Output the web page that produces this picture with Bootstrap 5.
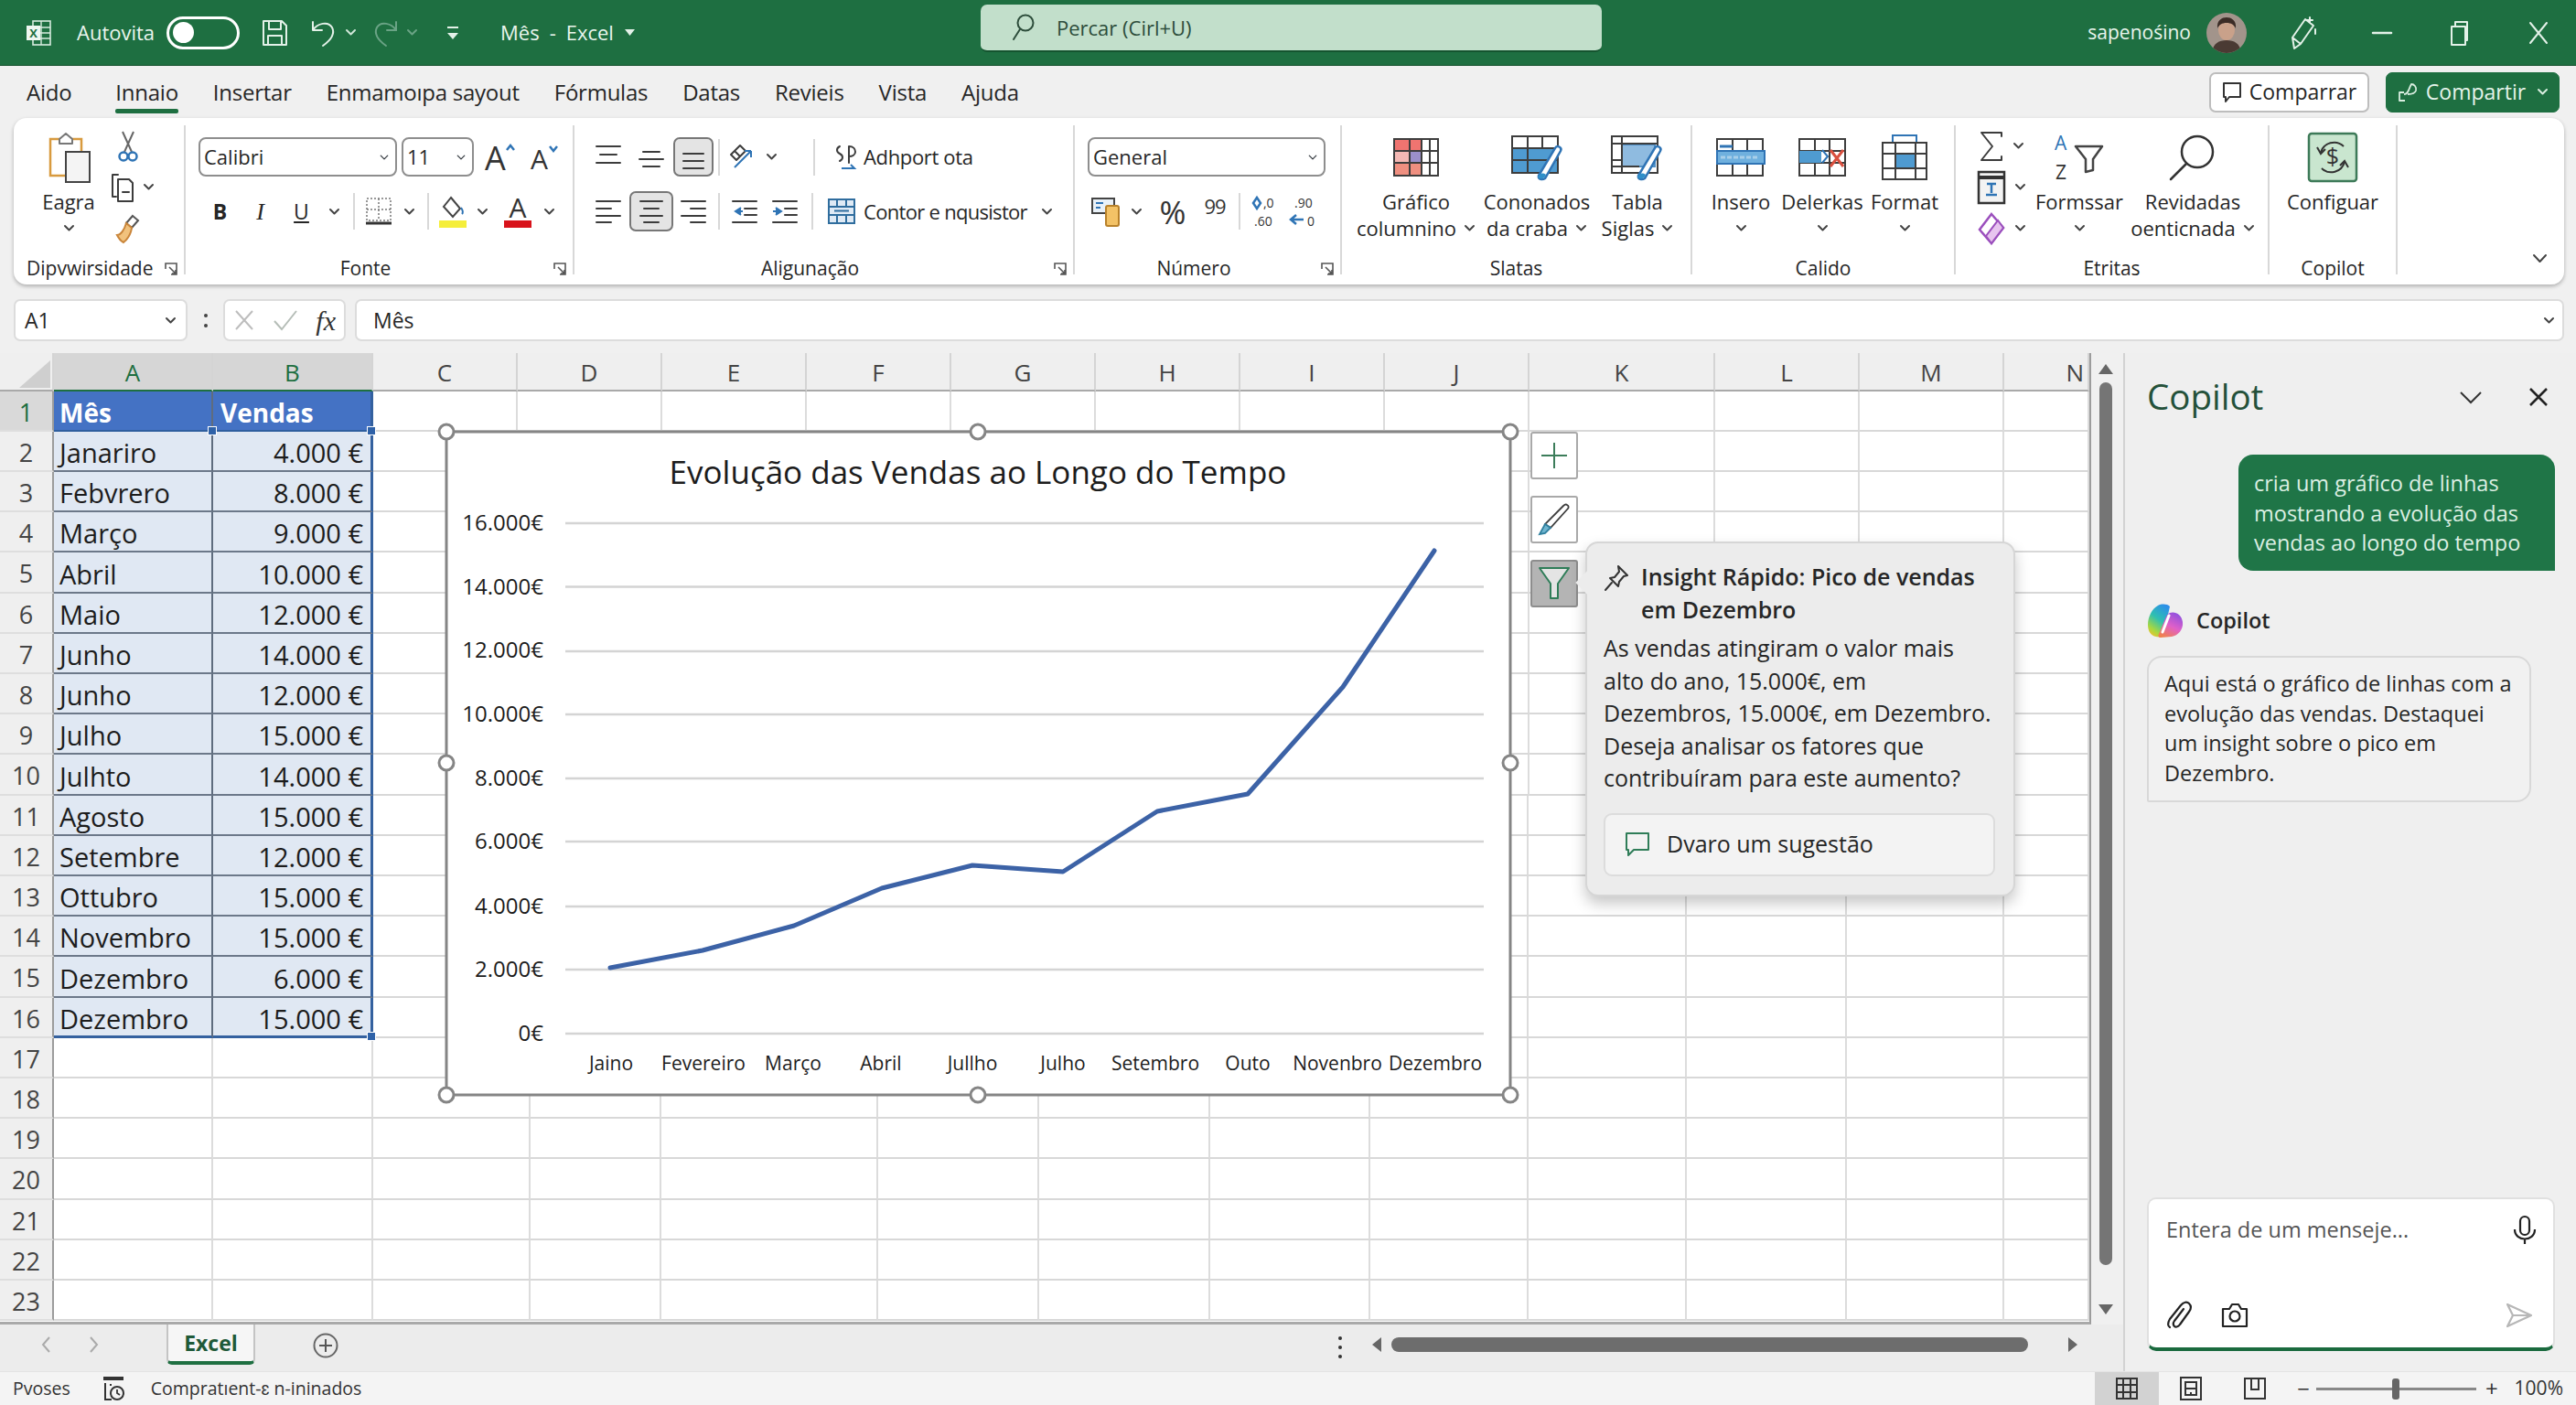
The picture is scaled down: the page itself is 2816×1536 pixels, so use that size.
<!DOCTYPE html>
<html lang="pt">
<head>
<meta charset="UTF-8" />
<title>Mês - Excel</title>
<link href="https://cdn.jsdelivr.net/npm/bootstrap@5.3.3/dist/css/bootstrap.min.css" rel="stylesheet" />
<style>
  html, body { margin: 0; width: 2816px; height: 1536px; overflow: hidden; }
  body { font-family: "Open Sans", "Liberation Sans", sans-serif; color: #262626; background: #f0f0f0; display: flex; flex-direction: column; }
  svg { display: block; flex: none; overflow: visible; }
  .ln { fill: none; stroke: #3c3c3c; stroke-width: 2; stroke-linecap: round; stroke-linejoin: round; }
  .chev { width: 13px; height: 9px; fill: none; stroke: #444; stroke-width: 2; stroke-linecap: round; stroke-linejoin: round; }

  /* title bar */
  .titlebar { height: 72px; flex: none; background: #1e6f41; color: #e9f5ed; display: grid; grid-template-columns: 1072px 679px 1fr; border-bottom: 1px solid #14512d; }
  .tb-left { display: flex; align-items: center; padding-left: 27px; font-size: 22px; }
  .tb-left .wl, .tb-right .wl { fill: none; stroke: #e3f1e8; stroke-width: 2; stroke-linecap: round; stroke-linejoin: round; }
  .tb-autosave { margin-left: 27px; width: 98px; }
  .tb-toggle { width: 80px; height: 36px; border: 3px solid #fff; border-radius: 18px; display: flex; align-items: center; padding-left: 4px; }
  .tb-toggle i { width: 23px; height: 23px; border-radius: 50%; background: #fff; display: block; }
  .tb-custom { margin-left: 30px; }
  .tb-doc { margin-left: 44px; display: flex; align-items: center; gap: 11px; font-size: 22px; }
  .tb-search { margin: 5px 0 14px; background: #c2dfcb; border-radius: 7px; display: flex; align-items: center; padding-left: 34px; gap: 23px; font-size: 22px; color: #2d4d3b; border-bottom: 2px solid #15542f; }
  .tb-right { display: flex; align-items: center; justify-content: flex-end; padding-right: 28px; font-size: 21px; }
  .tb-avatar { width: 44px; height: 44px; margin: 0 44px 0 17px; }
  .tb-min { margin-left: 55px; }
  .tb-max { margin-left: 56px; }
  .tb-x { margin-left: 59px; }

  /* tabs row */
  .tabsrow { height: 57px; flex: none; display: flex; align-items: center; justify-content: space-between; padding: 0 18px 0 29px; background: #f0f0f0; }
  .tabsrow .nav { gap: 38px; font-size: 24px; letter-spacing: -.25px; }
  .tabsrow .nav-item:first-child { margin-right: 10px; }
  .tabsrow .nav-link { padding: 0; color: #262626; position: relative; }
  .tabsrow .nav-link.active::after { content: ""; position: absolute; left: 0; right: 0; bottom: -5px; height: 5px; background: #1e6f41; border-radius: 2px; }
  .act-btn { height: 44px; font-size: 23px; padding: 0; border-radius: 7px; display: flex; align-items: center; justify-content: center; gap: 8px; }
  .act-comment { width: 175px; background: #fff; border: 2px solid #bdbdbd; color: #262626; }
  .act-share { width: 190px; margin-left: 18px; background: #1e6f41; border: 1px solid #1e6f41; color: #e4f3ea; }

  /* ribbon */
  .ribbon { height: 182px; flex: none; margin: 0 13px 0 15px; padding-top: 8px; background: #fff; border-radius: 14px; box-shadow: 0 2px 4px rgba(0,0,0,.28); display: flex; font-size: 22px; }
  .rb-group { height: 163px; flex: none; display: flex; flex-direction: column; border-right: 2px solid #d8d8d8; }
  .rb-body { height: 144px; flex: none; display: flex; }
  .rb-label { height: 19px; line-height: 24px; font-size: 21px; display: grid; grid-template-columns: 1fr auto 1fr; text-align: center; }
  .rb-label svg { justify-self: end; width: 16px; height: 16px; margin: 5px 6px 0 0; }
  .rb-label .lnc { fill: none; stroke: #555; stroke-width: 1.6; }
  .rb-label .lbl-off { margin-right: 30px; }
  .g-clip { width: 188px; }
  .g-clip .rb-body { padding-left: 17px; }
  .g-clip .rb-label { grid-template-columns: auto 1fr; padding-left: 14px; }
  .g-font { width: 425px; }
  .g-align { width: 547px; }
  .g-num { width: 292px; }
  .g-chart { width: 383px; }
  .g-chart .rb-body { padding-left: 11px; }
  .g-cells { width: 288px; }
  .g-cells .rb-body { padding-left: 5px; }
  .g-edit { width: 343px; }
  .g-edit .rb-body { padding-left: 18px; }
  .g-cfg { width: 140px; }
  .rb-end { flex: 1; display: flex; align-items: flex-end; justify-content: flex-end; padding: 0 18px 23px 0; }
  .rb-end .chev { width: 17px; height: 11px; }
  .rb-rows { display: flex; flex-direction: column; gap: 16px; padding: 13px 0 0 14px; }
  .rb-rows .fsel { font-size: 22px; height: 43px; padding: 0 22px 0 4px; border: 2px solid #8e8e8e; border-radius: 8px; background-position: right 5px center; background-size: 14px 10px; color: #262626; flex: none; }
  .sel-font { width: 217px; }
  .sel-size { width: 79px; margin-left: 5px; }
  .sel-num { width: 260px; }
  .rb-row { display: grid; align-items: center; height: 44px; }
  .font-r1 { display: flex; align-items: center; height: 43px; }
  .font-a1 { margin-left: 12px; }
  .font-r2 { grid-template-columns: 43px 45px 45px 26px 18px 36px 30px 12px 42px 22px 56px 12px; margin-left: 2px; }
  .align-r1 { grid-template-columns: 46px 48px 44px 12px 40px 22px 30px 12px 12px 36px auto; height: 43px; }
  .align-r2 { grid-template-columns: 46px 48px 44px 12px 43px 45px 16px 48px 186px auto; }
  .num-r2 { grid-template-columns: 40px 27px 52px 40px 14px 42px 46px; }
  .tool { display: flex; align-items: center; justify-content: center; height: 100%; white-space: nowrap; }
  .tool.on { background: #e4e4e4; border: 2px solid #777; border-radius: 7px; }
  .tool-txt { letter-spacing: -.35px; }
  .tool-txt.tight { letter-spacing: -.7px; }
  .vsep { width: 2px; height: 40px; background: #d8d8d8; margin: 0 auto; }
  .bigb { display: flex; flex-direction: column; align-items: center; flex: none; line-height: 29px; text-align: center; }
  .big-ico { height: 69px; display: flex; align-items: center; justify-content: center; }
  .big-line { height: 29px; display: flex; align-items: center; gap: 8px; white-space: nowrap; }
  .stack3 { display: flex; flex-direction: column; flex: none; }
  .stack3 > div { height: 45px; display: flex; align-items: center; gap: 10px; justify-content: center; }
  .c-clip { width: 86px; }
  .c-small { width: 44px; }
  .w140 { width: 140px; } .w124 { width: 124px; } .w96 { width: 96px; } .w82 { width: 82px; } .w98 { width: 98px; }
  .w64 { width: 64px; } .w106 { width: 106px; } .w142 { width: 142px; }
  .fs-b { font-weight: 700; font-size: 23px; }
  .fs-i { font-style: italic; font-family: "Liberation Serif", serif; font-size: 26px; }
  .fs-u { text-decoration: underline; font-size: 23px; }
  .pct { font-size: 35px; line-height: 1; color: #333; }
  .cmm { font-size: 22px; color: #333; letter-spacing: -1px; margin-top: -12px; }

  /* formula bar */
  .fbar { height: 46px; flex: none; margin: 16px 13px 13px 15px; display: flex; font-size: 23px; }
  .fbox { background: #fff; border: 2px solid #dcdcdc; border-radius: 7px; display: flex; align-items: center; }
  .f-name { width: 190px; padding: 0 10px; justify-content: space-between; }
  .f-dots { width: 39px; display: flex; flex-direction: column; align-items: center; justify-content: center; gap: 7px; }
  .f-dots i { width: 4px; height: 4px; background: #444; display: block; border-radius: 50%; }
  .f-fx { width: 134px; padding: 0 9px; justify-content: space-between; }
  .f-fx em { font-family: "Liberation Serif", serif; font-size: 30px; color: #333; }
  .f-val { flex: 1; margin-left: 10px; padding: 0 8px 0 18px; justify-content: space-between; }

  /* main split */
  .main-split { flex: 1; display: flex; min-height: 0; }
  .left-col { width: 2321px; flex: none; display: flex; flex-direction: column; }
  .grid-row { flex: 1; display: flex; min-height: 0; }
  .sheet-wrap { width: 2286px; flex: none; position: relative; background: #fff; border-right: 2px solid #9c9c9c; border-bottom: 3px solid #a9a9a9; overflow: visible; }
  .sheet { border-collapse: separate; border-spacing: 0; table-layout: fixed; width: 2284px; font-size: 29px; }
  .cw-59 { width: 59px; } .cw-174 { width: 174px; } .cw-175 { width: 175px; } .cw-158 { width: 158px; } .cw-203 { width: 203px; } .cw-93 { width: 93px; }
  .cw-172 { width: 172px; } .cw-143 { width: 143px; } .cw-237 { width: 237px; } .cw-176 { width: 176px; } .cw-187 { width: 187px; } .cw-173 { width: 173px; }
  .sheet th { font-weight: 400; text-align: center; line-height: 1; background: #efefef; color: #444; font-size: 27px; border-right: 2px solid #9c9c9c; border-bottom: 2px solid #dedede; padding: 2px 0 0; }
  .sheet thead th { height: 42px; border-right: 2px solid #d4d4d4; border-bottom: 2px solid #a9a9a9; font-size: 26px; }
  .sheet thead th.hd-on { background: #d6d6d6; color: #1e6f41; border-bottom-color: #1e6f41; }
  .sheet th.hd-row { background: #d9d9d9; color: #1e6f41; }
  .sheet td { border-right: 2px solid #dcdcdc; border-bottom: 2px solid #d8d8d8; padding: 3px 6px 0; line-height: 1; white-space: nowrap; position: relative; }
  .sheet tbody tr { height: 44px; }
  .sheet tbody tr:nth-child(5n) { height: 45px; }
  .corner { width: 34px; height: 30px; background: #cfcfcf; clip-path: polygon(100% 0, 100% 100%, 0 100%); margin: 4px 0 0 21px; }
  .sheet td.dat { background: #e0e8f3; color: #1c1c1c; border-right: 2px solid #5f6c7e; border-bottom: 2px solid #6c7889; }
  .sheet td.val { text-align: right; padding-right: 8px; border-right: 3px solid #34619f; }
  .sheet td.hed { background: #4472c4; color: #fff; font-weight: 700; font-size: 28px; border-bottom: 2px solid #2f5f9f; }
  .sheet td.val.hed { text-align: left; padding-left: 8px; }
  .sheet td.sel-last { border-bottom: 3px solid #34619f; }
  .sel-dot { position: absolute; right: -6px; bottom: -6px; width: 10px; height: 10px; background: #2f62a8; border: 1px solid #fff; z-index: 2; }

  .chart-obj { position: absolute; left: 470px; top: 68px; width: 1200px; height: 760px; font-family: "Open Sans", sans-serif; }
  .side-btn { position: absolute; left: 1673px; width: 52px; height: 52px; background: #fff; border: 2px solid #a9a9a9; border-radius: 3px; display: flex; align-items: center; justify-content: center; }
  .sb-1 { top: 86px; } .sb-2 { top: 156px; } .sb-3 { top: 226px; background: #b4b4b4; border-color: #8d8d8d; }
  .insight { position: absolute; left: 1733px; top: 206px; width: 470px; height: 388px; background: #ececec; border: 2px solid #d6d6d6; border-radius: 14px; box-shadow: 0 8px 16px rgba(0,0,0,.22); padding: 19px 20px 0 18px; font-size: 25px; line-height: 35.5px; color: #262626; }
  .insight::before { content: ""; position: absolute; left: -9px; top: 34px; width: 18px; height: 18px; background: #ececec; transform: rotate(45deg); }
  .ins-title { display: flex; gap: 13px; font-weight: 600; margin-bottom: 7px; }
  .ins-btn { margin-top: 20px; height: 69px; background: #f3f3f3; border: 2px solid #dcdcdc; border-radius: 9px; display: flex; align-items: center; gap: 18px; padding-left: 21px; }

  .vscroll { flex: 1; display: flex; flex-direction: column; align-items: center; padding: 12px 3px 0 0; }
  .vscroll .thumb { width: 14px; height: 965px; background: #757575; border-radius: 7px; margin: 9px 0 43px; }
  .tri-up { width: 0; height: 0; border: 8px solid transparent; border-top: 0; border-bottom: 11px solid #666; }
  .tri-dn { width: 0; height: 0; border: 8px solid transparent; border-bottom: 0; border-top: 11px solid #666; }
  .tri-lt { width: 0; height: 0; border: 8px solid transparent; border-left: 0; border-right: 10px solid #666; }
  .tri-rt { width: 0; height: 0; border: 8px solid transparent; border-right: 0; border-left: 10px solid #666; }

  .tabbar { height: 51px; flex: none; display: flex; align-items: flex-start; background: #ececec; }
  .sh-nav { width: 182px; height: 44px; display: flex; align-items: center; padding-left: 44px; gap: 41px; }
  .sh-tab { width: 97px; height: 44px; background: #f6f6f6; border: 2px solid #c4c4c4; border-top: 0; border-bottom: 4px solid #1e6f41; border-radius: 0 0 6px 6px; text-align: center; font-weight: 700; font-size: 23px; line-height: 40px; color: #1f5a39; }
  .sh-add { margin: 9px 0 0 63px; width: 28px; height: 28px; }
  .sh-dots { margin: 13px 0 0 1091px; width: 8px; display: flex; flex-direction: column; gap: 6px; align-items: center; }
  .sh-dots i { width: 4px; height: 4px; border-radius: 50%; background: #333; display: block; }
  .hscroll { margin: 14px 0 0 31px; display: flex; align-items: center; }
  .hscroll .thumb { width: 696px; height: 16px; background: #6d6d6d; border-radius: 8px; margin: 0 44px 0 11px; }

  /* copilot pane */
  .pane { flex: 1; border-left: 2px solid #d2d2d2; background: #efefef; padding: 0 23px 22px 24px; display: flex; flex-direction: column; }
  .pane-hd { height: 58px; margin-top: 19px; display: flex; align-items: center; padding-right: 5px; }
  .pane-title { font-size: 38.5px; color: #24513a; flex: 1; }
  .pane-hd svg { width: 26px; height: 26px; }
  .bub-me { align-self: flex-end; width: 346px; height: 127px; margin-top: 34px; background: #1f7547; color: #dcefe3; border-radius: 16px 16px 0 16px; padding: 15px 10px 0 17px; font-size: 23.5px; line-height: 32.5px; }
  .cp-who { height: 38px; margin-top: 36px; display: flex; align-items: center; gap: 14px; font-weight: 600; font-size: 23.5px; }
  .bub-ai { width: 420px; height: 160px; margin-top: 19px; background: #f1f1f1; border: 2px solid #d8d8d8; border-radius: 16px 16px 16px 2px; padding: 12px 10px 0 17px; font-size: 23.5px; line-height: 32.5px; }
  .msg-box { margin-top: auto; height: 168px; background: #fff; border: 2px solid #e0e0e0; border-bottom: 4px solid #1a6a3e; border-radius: 10px; padding: 0 18px 0 19px; display: flex; flex-direction: column; }
  .msg-top { display: flex; justify-content: space-between; align-items: center; height: 66px; font-size: 23.5px; color: #555; padding-top: 2px; }
  .msg-bot { margin-top: auto; height: 64px; display: flex; align-items: center; gap: 32px; padding-bottom: 6px; }

  /* status bar */
  .statusbar { height: 37px; flex: none; background: #f4f4f4; border-top: 1px solid #e4e4e4; display: flex; align-items: center; font-size: 19.5px; padding-left: 14px; color: #333; }
  .st-cal { margin: 0 28px 0 34px; }
  .st-right { margin-left: auto; display: flex; align-items: center; height: 100%; padding-right: 14px; }
  .st-view { width: 70px; height: 100%; display: flex; align-items: center; justify-content: center; }
  .st-view.on { background: #d2d2d2; }
  .zoomer { width: 175px; height: 3px; background: #888; margin: 0 10px 0 7px; position: relative; }
  .zoomer i { position: absolute; left: 83px; top: -10px; width: 8px; height: 23px; border-radius: 3px; background: #666; }
  .zm { font-size: 24px; line-height: 1; }
  .zm-first { margin-left: 11px; }
  .zm-pct { font-size: 21px; margin-left: 18px; }
</style>
</head>
<body>

<!-- title bar -->
<header class="titlebar">
  <div class="tb-left">
    <svg width="30" height="30" viewBox="0 0 30 30"><rect x="9" y="2" width="19" height="26" fill="none" stroke="#d7ebdf" stroke-width="1.6"/><path d="M9 9h19M9 15h19M9 21h19M18 2v26" fill="none" stroke="#d7ebdf" stroke-width="1.4"/><rect x="2" y="7" width="15" height="16" fill="#eef7f1"/><text x="9.500" y="20" font-size="13" font-weight="700" fill="#1e6f41" text-anchor="middle">X</text></svg>
    <span class="tb-autosave">Autovita</span>
    <span class="tb-toggle"><i></i></span>
    <svg class="ms-4" width="29" height="30" viewBox="0 0 29 30"><path class="wl" d="M2 2h20l5 5v21H2zM8 2v9h13V2M7 28V18h15v10"/></svg>
    <svg class="ms-4" width="30" height="30" viewBox="0 0 30 30"><path class="wl" d="M3 3v9h10M3 12C8 4 20 2 24 9c4 8-3 15-10 20"/></svg>
    <svg class="chev ms-2" viewBox="0 0 13 9"><path stroke="#cfe5d7" d="M2 2l4.500 4.500L11 2"/></svg>
    <svg class="ms-3" width="30" height="30" viewBox="0 0 30 30"><path d="M27 3v9H17M27 12C22 4 10 2 6 9c-4 8 3 15 10 20" fill="none" stroke="#6aa385" stroke-width="2" stroke-linecap="round"/></svg>
    <svg class="chev ms-2" viewBox="0 0 13 9"><path stroke="#6aa385" d="M2 2l4.500 4.500L11 2"/></svg>
    <svg class="tb-custom" width="16" height="18" viewBox="0 0 16 18"><path d="M2 3h12" stroke="#e3f1e8" stroke-width="2"/><path d="M2 9h12l-6 7z" fill="#e3f1e8"/></svg>
    <div class="tb-doc"><span>Mês</span><span>-</span><span>Excel</span><svg width="13" height="9" viewBox="0 0 13 9"><path d="M1 1h11L6.500 8z" fill="#e3f1e8"/></svg></div>
  </div>
  <div class="tb-search">
    <svg width="26" height="30" viewBox="0 0 26 30"><circle cx="15" cy="10" r="8.500" fill="none" stroke="#2d4d3b" stroke-width="2"/><path d="M9 17L2 28" stroke="#2d4d3b" stroke-width="2" stroke-linecap="round"/></svg>
    <span>Percar (Cirl+U)</span>
  </div>
  <div class="tb-right">
    <span>sapenośino</span>
    <svg class="tb-avatar" viewBox="0 0 44 44"><defs><clipPath id="av"><circle cx="22" cy="22" r="22"/></clipPath></defs><g clip-path="url(#av)"><rect width="44" height="44" fill="#a2948b"/><path d="M6 44c1-11 8-14 16-14s15 3 16 14z" fill="#4a3a33"/><ellipse cx="22" cy="19" rx="9" ry="11" fill="#c9a18a"/><path d="M12 17c-1-9 5-12 10-12s11 3 10 12c-2-4-5-6-10-6s-8 2-10 6z" fill="#3b2c26"/></g></svg>
    <svg width="36" height="40" viewBox="0 0 36 40"><path class="wl" d="M8 37l-2-12L20 5l9 7-14 20zM6 25l9 7M25 3v6M22 6h6M31 16v5"/></svg>
    <svg class="tb-min" width="26" height="4" viewBox="0 0 26 4"><path d="M3 2h20" stroke="#e3f1e8" stroke-width="2.500" stroke-linecap="round"/></svg>
    <svg class="tb-max" width="30" height="30" viewBox="0 0 30 30"><path class="wl" d="M7 8h15v20H7zM11 8V3h13v20h-2"/></svg>
    <svg class="tb-x" width="26" height="28" viewBox="0 0 26 28"><path class="wl" d="M4 3l18 22M22 3L4 25"/></svg>
  </div>
</header>

<!-- tabs -->
<div class="tabsrow">
  <ul class="nav">
    <li class="nav-item"><a class="nav-link" href="#">Aido</a></li>
    <li class="nav-item"><a class="nav-link active" href="#">Innaio</a></li>
    <li class="nav-item"><a class="nav-link" href="#">Insertar</a></li>
    <li class="nav-item"><a class="nav-link" href="#">Enmamoıpa sayout</a></li>
    <li class="nav-item"><a class="nav-link" href="#">Fórmulas</a></li>
    <li class="nav-item"><a class="nav-link" href="#">Datas</a></li>
    <li class="nav-item"><a class="nav-link" href="#">Revieis</a></li>
    <li class="nav-item"><a class="nav-link" href="#">Vista</a></li>
    <li class="nav-item"><a class="nav-link" href="#">Ajuda</a></li>
  </ul>
  <div class="d-flex">
    <button class="btn act-btn act-comment"><svg width="22" height="26" viewBox="0 0 22 26"><path d="M2 3h18v15H8l-4 5v-5H2z" fill="none" stroke="#333" stroke-width="2" stroke-linejoin="round"/></svg>Comparrar</button>
    <button class="btn act-btn act-share"><svg width="24" height="24" viewBox="0 0 24 24"><path d="M9 21H3v-9h5M8 14c5 0 5-6 8-11 3 0 6 3 5 7-1 3-5 4-9 4" fill="none" stroke="#d9eee0" stroke-width="1.800" stroke-linejoin="round"/></svg>Compartir<svg class="chev ms-1" viewBox="0 0 13 9"><path stroke="#d9eee0" d="M2 2l4.500 4.500L11 2"/></svg></button>
  </div>
</div>

<!-- ribbon -->
<div class="ribbon">
  <section class="rb-group g-clip">
    <div class="rb-body">
      <div class="bigb c-clip">
        <div class="big-ico"><svg width="50" height="56" viewBox="0 0 50 56"><path d="M5 8h34v40H5z" fill="#fff" stroke="#d89a3e" stroke-width="2.500"/><path d="M15 8l7-6 7 6v5H15z" fill="#fff" stroke="#777" stroke-width="2" stroke-linejoin="round"/><rect x="22" y="22" width="26" height="33" fill="#f4f4f4" stroke="#444" stroke-width="2"/></svg></div>
        <div class="big-line">Eagra</div>
        <div class="big-line"><svg class="chev" viewBox="0 0 13 9"><path d="M2 2l4.500 4.500L11 2"/></svg></div>
      </div>
      <div class="stack3 c-small">
        <div><svg width="24" height="36" viewBox="0 0 24 36"><path d="M6 2l10 22M18 2L8 24" fill="none" stroke="#666" stroke-width="2"/><circle cx="7" cy="29" r="4.500" fill="none" stroke="#2f74b5" stroke-width="2.500"/><circle cx="17" cy="29" r="4.500" fill="none" stroke="#2f74b5" stroke-width="2.500"/></svg></div>
        <div class="ms-2"><svg width="26" height="34" viewBox="0 0 26 34"><path class="ln" d="M9 3H3v24h4M9 8h12l4 4v20H9zM14 22h7"/></svg><svg class="chev" viewBox="0 0 13 9"><path d="M2 2l4.500 4.500L11 2"/></svg></div>
        <div><svg width="30" height="36" viewBox="0 0 30 36"><path d="M20 4l6 5-7 8-6-5z" fill="none" stroke="#555" stroke-width="2"/><path d="M13 12l6 5c-1 8-6 14-9 16-2-1-5-4-7-8 4 0 8-6 10-13z" fill="#f1c27d" stroke="#c9853a" stroke-width="2"/></svg></div>
      </div>
    </div>
    <div class="rb-label"><span class="text-start">Dipvwirsidade</span><svg viewBox="0 0 16 16"><path class="lnc" d="M2 8V2h12v12H8M6 6l7 7M13 9v4H9"/></svg></div>
  </section>

  <section class="rb-group g-font">
    <div class="rb-body">
      <div class="rb-rows">
        <div class="font-r1">
          <select class="form-select fsel sel-font"><option>Calibri</option></select>
          <select class="form-select fsel sel-size"><option>11</option></select>
          <div class="tool font-a1"><svg width="34" height="36" viewBox="0 0 34 36"><text x="0" y="32" font-size="36" fill="#333">A</text><path d="M24 10l4-5 4 5" fill="none" stroke="#2f74b5" stroke-width="2.500"/></svg></div>
          <div class="tool ms-3"><svg width="30" height="32" viewBox="0 0 30 32"><text x="0" y="29" font-size="30" fill="#333">A</text><path d="M21 4l4 5 4-5" fill="none" stroke="#2f74b5" stroke-width="2.500"/></svg></div>
        </div>
        <div class="rb-row font-r2">
          <div class="tool fs-b">B</div>
          <div class="tool fs-i">I</div>
          <div class="tool fs-u">U</div>
          <div class="tool"><svg class="chev" viewBox="0 0 13 9"><path d="M2 2l4.500 4.500L11 2"/></svg></div>
          <div class="tool"><div class="vsep"></div></div>
          <div class="tool"><svg width="30" height="32" viewBox="0 0 30 32"><path d="M2 2h26v24H2zM15 2v24M2 14h26" fill="none" stroke="#777" stroke-width="1.500" stroke-dasharray="2 2"/><path d="M1 29h28" stroke="#333" stroke-width="3"/></svg></div>
          <div class="tool"><svg class="chev" viewBox="0 0 13 9"><path d="M2 2l4.500 4.500L11 2"/></svg></div>
          <div class="tool"><div class="vsep"></div></div>
          <div class="tool"><svg width="30" height="36" viewBox="0 0 30 36"><path d="M13 3l10 12-8 9-10-11z" fill="none" stroke="#444" stroke-width="2"/><path d="M24 14c2 3 3 5 1 7" fill="none" stroke="#2f74b5" stroke-width="2"/><rect x="0" y="28" width="30" height="8" fill="#f5ee3a"/></svg></div>
          <div class="tool"><svg class="chev" viewBox="0 0 13 9"><path d="M2 2l4.500 4.500L11 2"/></svg></div>
          <div class="tool"><svg width="30" height="36" viewBox="0 0 30 36"><text x="15" y="25" font-size="30" fill="#333" text-anchor="middle">A</text><rect x="0" y="28" width="30" height="8" fill="#d8131b"/></svg></div>
          <div class="tool"><svg class="chev" viewBox="0 0 13 9"><path d="M2 2l4.500 4.500L11 2"/></svg></div>
        </div>
      </div>
    </div>
    <div class="rb-label"><span></span><span class="lbl-off">Fonte</span><svg viewBox="0 0 16 16"><path class="lnc" d="M2 8V2h12v12H8M6 6l7 7M13 9v4H9"/></svg></div>
  </section>

  <section class="rb-group g-align">
    <div class="rb-body">
      <div class="rb-rows">
        <div class="rb-row align-r1">
          <div class="tool"><svg width="28" height="28" viewBox="0 0 28 28"><path class="ln" d="M1 2h26M5 11h18M1 20h26"/></svg></div>
          <div class="tool"><svg width="28" height="28" viewBox="0 0 28 28"><path class="ln" d="M5 8h18M1 16h26M5 24h18"/></svg></div>
          <div class="tool on"><svg width="28" height="28" viewBox="0 0 28 28"><path class="ln" d="M3 10h22M3 18h22M3 26h22"/></svg></div>
          <div class="tool"><div class="vsep"></div></div>
          <div class="tool"><svg width="30" height="30" viewBox="0 0 30 30"><path class="ln" d="M2 12L12 2l6 6L8 18zM6 8l6 6"/><path d="M6 26L24 8M24 8h-7M24 8v7" fill="none" stroke="#2f74b5" stroke-width="2"/></svg></div>
          <div class="tool"><svg class="chev" viewBox="0 0 13 9"><path d="M2 2l4.500 4.500L11 2"/></svg></div>
          <span></span>
          <div class="tool"><div class="vsep"></div></div>
          <span></span>
          <div class="tool"><svg width="28" height="30" viewBox="0 0 28 30"><path class="ln" d="M6 3c-4 2-4 6 0 8s4 6 0 8M16 3v18M16 3c5 0 7 3 7 6s-3 5-7 5"/><path d="M8 27h14l-4-4M22 27" fill="none" stroke="#2f74b5" stroke-width="2"/></svg></div>
          <div class="tool tool-txt justify-content-start">Adhport ota</div>
        </div>
        <div class="rb-row align-r2">
          <div class="tool"><svg width="28" height="28" viewBox="0 0 28 28"><path class="ln" d="M1 3h26M1 11h16M1 19h26M1 26h16"/></svg></div>
          <div class="tool on"><svg width="28" height="28" viewBox="0 0 28 28"><path class="ln" d="M2 3h24M6 11h16M2 19h24M6 26h16"/></svg></div>
          <div class="tool"><svg width="28" height="28" viewBox="0 0 28 28"><path class="ln" d="M1 3h26M11 11h16M1 19h26M11 26h16"/></svg></div>
          <div class="tool"><div class="vsep"></div></div>
          <div class="tool"><svg width="28" height="28" viewBox="0 0 28 28"><path class="ln" d="M1 3h26M14 11h13M14 18h13M1 26h26"/><path d="M10 10l-6 4 6 4M4 14h8" fill="#2f74b5" stroke="#2f74b5" stroke-width="2"/></svg></div>
          <div class="tool"><svg width="28" height="28" viewBox="0 0 28 28"><path class="ln" d="M1 3h26M14 11h13M14 18h13M1 26h26"/><path d="M4 10l6 4-6 4M1 14h8" fill="#2f74b5" stroke="#2f74b5" stroke-width="2"/></svg></div>
          <div class="tool"><div class="vsep"></div></div>
          <div class="tool"><svg width="30" height="30" viewBox="0 0 30 30"><rect x="1" y="2" width="28" height="26" fill="#dfeaf5" stroke="#2f6d9e" stroke-width="2"/><path d="M1 10h28M1 19h28M10 2v8M20 2v8M10 19v9M20 19v9M7 14.500h16" fill="none" stroke="#2f6d9e" stroke-width="2"/></svg></div>
          <div class="tool tool-txt tight justify-content-start">Contor e nqusistor</div>
          <div class="tool"><svg class="chev ms-2" viewBox="0 0 13 9"><path d="M2 2l4.500 4.500L11 2"/></svg></div>
        </div>
      </div>
    </div>
    <div class="rb-label"><span></span><span class="lbl-off">Aligunação</span><svg viewBox="0 0 16 16"><path class="lnc" d="M2 8V2h12v12H8M6 6l7 7M13 9v4H9"/></svg></div>
  </section>

  <section class="rb-group g-num">
    <div class="rb-body">
      <div class="rb-rows">
        <div class="font-r1"><select class="form-select fsel sel-num"><option>General</option></select></div>
        <div class="rb-row num-r2">
          <div class="tool"><svg width="32" height="36" viewBox="0 0 32 36"><rect x="1" y="4" width="24" height="16" fill="#e9f1f8" stroke="#444" stroke-width="2"/><path d="M5 9h8M5 14h5" stroke="#2f74b5" stroke-width="2"/><rect x="16" y="12" width="14" height="22" rx="2" fill="#f3c266" stroke="#b8812a" stroke-width="2"/></svg></div>
          <div class="tool"><svg class="chev" viewBox="0 0 13 9"><path d="M2 2l4.500 4.500L11 2"/></svg></div>
          <div class="tool"><span class="pct">%</span></div>
          <div class="tool"><span class="cmm">99</span></div>
          <div class="tool"><div class="vsep"></div></div>
          <div class="tool"><svg width="36" height="36" viewBox="0 0 36 36"><text x="16" y="14" font-size="14" fill="#333">,0</text><text x="6" y="34" font-size="14" fill="#333">.60</text><path d="M9 3l-4 6 4 6 4-6z" fill="none" stroke="#2f74b5" stroke-width="2.500"/></svg></div>
          <div class="tool"><svg width="36" height="36" viewBox="0 0 36 36"><text x="6" y="14" font-size="14" fill="#333">.90</text><text x="20" y="34" font-size="14" fill="#333">0</text><path d="M2 27h14M8 22l-6 5 6 5" fill="none" stroke="#2f74b5" stroke-width="2.500"/></svg></div>
        </div>
      </div>
    </div>
    <div class="rb-label"><span></span><span class="lbl-off">Número</span><svg viewBox="0 0 16 16"><path class="lnc" d="M2 8V2h12v12H8M6 6l7 7M13 9v4H9"/></svg></div>
  </section>

  <section class="rb-group g-chart">
    <div class="rb-body">
      <div class="bigb w140">
        <div class="big-ico"><svg width="50" height="42" viewBox="0 0 50 42"><rect x="1" y="1" width="48" height="40" fill="#fff"/><rect x="1" y="1" width="30" height="13" fill="#ef7470"/><rect x="1" y="14" width="17" height="13" fill="#f4b8b4"/><rect x="18" y="14" width="13" height="13" fill="#9b8fc9"/><rect x="1" y="27" width="30" height="14" fill="#ef8f80"/><path d="M1 1h48v40H1zM1 14h48M1 27h48M18 1v40M31 1v40M40 1v40" fill="none" stroke="#3d3d3d" stroke-width="2"/></svg></div>
        <div class="big-line">Gráfico</div>
        <div class="big-line">columnino<svg class="chev" viewBox="0 0 13 9"><path d="M2 2l4.500 4.500L11 2"/></svg></div>
      </div>
      <div class="bigb w124">
        <div class="big-ico"><svg width="56" height="48" viewBox="0 0 56 48"><rect x="1" y="15" width="50" height="26" fill="#4f9bd1"/><path d="M1 1h50v40H1zM1 14h50M1 27h50M18 1v40M34 1v14" fill="none" stroke="#3d3d3d" stroke-width="2"/><path d="M30 44l18-30c2-4 8-1 6 3L37 47c-3 2-8 1-7-3z" fill="#fff" stroke="#2f74b5" stroke-width="2.500"/><path d="M29 46c1-4 5-6 9-3-1 4-5 6-9 3z" fill="#2f8fc9"/></svg></div>
        <div class="big-line">Cononados</div>
        <div class="big-line">da craba<svg class="chev" viewBox="0 0 13 9"><path d="M2 2l4.500 4.500L11 2"/></svg></div>
      </div>
      <div class="bigb w96">
        <div class="big-ico"><svg width="58" height="48" viewBox="0 0 58 48"><rect x="12" y="10" width="36" height="24" fill="#8fbbe0" stroke="#4f8fc5" stroke-width="2"/><path d="M1 1h50v40H1zM1 9h50M12 1v40M1 27h10M1 34h30" fill="none" stroke="#3d3d3d" stroke-width="2"/><path d="M30 44l18-30c2-4 8-1 6 3L37 47c-3 2-8 1-7-3z" fill="#fff" stroke="#2f74b5" stroke-width="2.500"/><path d="M29 46c1-4 5-6 9-3-1 4-5 6-9 3z" fill="#2f8fc9"/></svg></div>
        <div class="big-line">Tabla</div>
        <div class="big-line">Siglas<svg class="chev" viewBox="0 0 13 9"><path d="M2 2l4.500 4.500L11 2"/></svg></div>
      </div>
    </div>
    <div class="rb-label"><span></span><span>Slatas</span><span></span></div>
  </section>

  <section class="rb-group g-cells">
    <div class="rb-body">
      <div class="bigb w96">
        <div class="big-ico"><svg width="54" height="42" viewBox="0 0 54 42"><path d="M1 1h50v40H1zM1 14h50M1 27h50M18 1v40M34 1v40" fill="none" stroke="#3d3d3d" stroke-width="2"/><rect x="1" y="14" width="52" height="14" fill="#6fb0de" stroke="#2f74b5" stroke-width="2"/><path d="M5 21h42" stroke="#a9cfe9" stroke-width="3" stroke-dasharray="5 2"/><path d="M4 9h14" stroke="#2f74b5" stroke-width="3"/></svg></div>
        <div class="big-line">Insero</div>
        <div class="big-line"><svg class="chev" viewBox="0 0 13 9"><path d="M2 2l4.500 4.500L11 2"/></svg></div>
      </div>
      <div class="bigb w82">
        <div class="big-ico"><svg width="52" height="42" viewBox="0 0 52 42"><path d="M1 1h50v40H1zM1 14h50M1 27h50M18 1v40M34 1v40" fill="none" stroke="#3d3d3d" stroke-width="2"/><rect x="1" y="14" width="24" height="13" fill="#4f9bd1"/><path d="M26 13l6 7-6 7" fill="#fff" stroke="#2f74b5" stroke-width="2"/><path d="M35 13l14 18M49 13L35 31" stroke="#d9503f" stroke-width="3"/></svg></div>
        <div class="big-line">Delerkas</div>
        <div class="big-line"><svg class="chev" viewBox="0 0 13 9"><path d="M2 2l4.500 4.500L11 2"/></svg></div>
      </div>
      <div class="bigb w98">
        <div class="big-ico"><svg width="50" height="50" viewBox="0 0 50 50"><path d="M12 9V1h26v8" fill="none" stroke="#2f74b5" stroke-width="2"/><rect x="14" y="21" width="24" height="16" fill="#4f9bd1"/><path d="M1 9h48v40H1zM1 21h48M1 37h48M15 9v40M37 9v40" fill="none" stroke="#3d3d3d" stroke-width="2"/></svg></div>
        <div class="big-line">Format</div>
        <div class="big-line"><svg class="chev" viewBox="0 0 13 9"><path d="M2 2l4.500 4.500L11 2"/></svg></div>
      </div>
    </div>
    <div class="rb-label"><span></span><span>Calido</span><span></span></div>
  </section>

  <section class="rb-group g-edit">
    <div class="rb-body">
      <div class="stack3 w64">
        <div><svg width="26" height="34" viewBox="0 0 26 34"><path class="ln" d="M24 6V2H2l12 15L2 32h22v-4"/></svg><svg class="chev" viewBox="0 0 13 9"><path d="M2 2l4.500 4.500L11 2"/></svg></div>
        <div><svg width="30" height="36" viewBox="0 0 30 36"><rect x="1" y="1" width="28" height="34" fill="#f3f3f3" stroke="#333" stroke-width="2.500"/><path d="M1 7h28" stroke="#333" stroke-width="4"/><path d="M10 14h10M15 14v10M9 26h12" stroke="#2f74b5" stroke-width="2.500" fill="none"/></svg><svg class="chev" viewBox="0 0 13 9"><path d="M2 2l4.500 4.500L11 2"/></svg></div>
        <div><svg width="30" height="36" viewBox="0 0 30 36"><path d="M15 2l13 15-13 17L2 19z" fill="#fff" stroke="#9b4fbd" stroke-width="2.500"/><path d="M9 26l13-17 6 8-13 17z" fill="#e7c4ef" stroke="#9b4fbd" stroke-width="2"/></svg><svg class="chev" viewBox="0 0 13 9"><path d="M2 2l4.500 4.500L11 2"/></svg></div>
      </div>
      <div class="bigb w106">
        <div class="big-ico"><svg width="54" height="50" viewBox="0 0 54 50"><text x="0" y="17" font-size="21" fill="#2f74b5">A</text><text x="1" y="49" font-size="21" fill="#333">Z</text><path d="M23 13h29L42 27v12l-8 2V27z" fill="#fff" stroke="#444" stroke-width="2.500" stroke-linejoin="round"/></svg></div>
        <div class="big-line">Formssar</div>
        <div class="big-line"><svg class="chev" viewBox="0 0 13 9"><path d="M2 2l4.500 4.500L11 2"/></svg></div>
      </div>
      <div class="bigb w142">
        <div class="big-ico"><svg width="54" height="52" viewBox="0 0 54 52"><circle cx="32" cy="20" r="17" fill="none" stroke="#333" stroke-width="2.500"/><path d="M20 33L3 50" stroke="#333" stroke-width="2.500" stroke-linecap="round"/></svg></div>
        <div class="big-line">Revidadas</div>
        <div class="big-line">oenticnada<svg class="chev" viewBox="0 0 13 9"><path d="M2 2l4.500 4.500L11 2"/></svg></div>
      </div>
    </div>
    <div class="rb-label"><span></span><span>Etritas</span><span></span></div>
  </section>

  <section class="rb-group g-cfg">
    <div class="rb-body">
      <div class="bigb w-100">
        <div class="big-ico"><svg width="54" height="54" viewBox="0 0 54 54"><rect x="1" y="1" width="52" height="52" rx="3" fill="#c9e6cf" stroke="#3d7a58" stroke-width="2.500"/><path d="M14 22a15 15 0 0 1 25-7M40 32a15 15 0 0 1-25 7" fill="none" stroke="#333" stroke-width="2"/><path d="M10 16l4 7 5-5M44 38l-4-7-5 5" fill="none" stroke="#333" stroke-width="2"/><text x="27" y="35" font-size="25" fill="#333" text-anchor="middle">$</text></svg></div>
        <div class="big-line">Configuar</div>
      </div>
    </div>
    <div class="rb-label"><span></span><span>Copilot</span><span></span></div>
  </section>

  <div class="rb-end"><svg class="chev" viewBox="0 0 17 11"><path d="M2 2l6.500 7L15 2"/></svg></div>
</div>

<!-- formula bar -->
<div class="fbar">
  <div class="fbox f-name"><span>A1</span><svg class="chev" viewBox="0 0 13 9"><path d="M2 2l4.500 4.500L11 2"/></svg></div>
  <div class="f-dots"><i></i><i></i></div>
  <div class="fbox f-fx">
    <svg width="24" height="26" viewBox="0 0 24 26"><path d="M3 3l18 20M21 3L3 23" stroke="#bdbdbd" stroke-width="2"/></svg>
    <svg width="28" height="26" viewBox="0 0 28 26"><path d="M2 14l8 9L26 3" fill="none" stroke="#b5bdb7" stroke-width="2"/></svg>
    <em>fx</em>
  </div>
  <div class="fbox f-val"><span>Mês</span><svg class="chev" viewBox="0 0 13 9"><path d="M2 2l4.500 4.500L11 2"/></svg></div>
</div>

<div class="main-split">
  <div class="left-col">
    <div class="grid-row">
      <div class="sheet-wrap">
        <table class="sheet" id="sheetTop">
          <colgroup><col class="cw-59"><col class="cw-174"><col class="cw-175"><col class="cw-158"><col class="cw-158"><col class="cw-158"><col class="cw-158"><col class="cw-158"><col class="cw-158"><col class="cw-158"><col class="cw-158"><col class="cw-203"><col class="cw-158"><col class="cw-158"><col class="cw-93"></colgroup>
          <thead>
            <tr><th><div class="corner"></div></th><th class="hd-on">A</th><th class="hd-on">B</th><th>C</th><th>D</th><th>E</th><th>F</th><th>G</th><th>H</th><th>I</th><th>J</th><th>K</th><th>L</th><th>M</th><th class="text-end pe-1">N</th></tr>
          </thead>
          <tbody>
            <tr><th class="hd-row">1</th><td class="dat hed">Mês<i class="sel-dot"></i></td><td class="dat val hed">Vendas<i class="sel-dot"></i></td></tr>
            <tr><th>2</th><td class="dat">Janariro</td><td class="dat val">4.000 €</td></tr>
            <tr><th>3</th><td class="dat">Febvrero</td><td class="dat val">8.000 €</td></tr>
            <tr><th>4</th><td class="dat">Março</td><td class="dat val">9.000 €</td></tr>
            <tr><th>5</th><td class="dat">Abril</td><td class="dat val">10.000 €</td></tr>
            <tr><th>6</th><td class="dat">Maio</td><td class="dat val">12.000 €</td></tr>
            <tr><th>7</th><td class="dat">Junho</td><td class="dat val">14.000 €</td></tr>
            <tr><th>8</th><td class="dat">Junho</td><td class="dat val">12.000 €</td></tr>
            <tr><th>9</th><td class="dat">Julho</td><td class="dat val">15.000 €</td></tr>
            <tr><th>10</th><td class="dat">Julhto</td><td class="dat val">14.000 €</td></tr>
          </tbody>
        </table>
        <table class="sheet" id="sheetLow">
          <colgroup><col class="cw-59"><col class="cw-174"><col class="cw-175"><col class="cw-172"><col class="cw-143"><col class="cw-237"><col class="cw-176"><col class="cw-187"><col class="cw-175"><col class="cw-173"><col class="cw-173"><col class="cw-175"><col class="cw-172"><col class="cw-93"></colgroup>
          <tbody>
            <tr><th>11</th><td class="dat">Agosto</td><td class="dat val">15.000 €</td></tr>
            <tr><th>12</th><td class="dat">Setembre</td><td class="dat val">12.000 €</td></tr>
            <tr><th>13</th><td class="dat">Ottubro</td><td class="dat val">15.000 €</td></tr>
            <tr><th>14</th><td class="dat">Novembro</td><td class="dat val">15.000 €</td></tr>
            <tr><th>15</th><td class="dat">Dezembro</td><td class="dat val">6.000 €</td></tr>
            <tr><th>16</th><td class="dat sel-last">Dezembro</td><td class="dat val sel-last">15.000 €<i class="sel-dot"></i></td></tr>
            <tr><th>17</th><td></td><td></td></tr>
            <tr><th>18</th><td></td><td></td></tr>
            <tr><th>19</th><td></td><td></td></tr>
            <tr><th>20</th><td></td><td></td></tr>
            <tr><th>21</th><td></td><td></td></tr>
            <tr><th>22</th><td></td><td></td></tr>
            <tr><th>23</th><td></td><td></td></tr>
          </tbody>
        </table>

        <svg class="chart-obj" viewBox="470 454 1200 760">
          <rect x="488" y="472" width="1163" height="725" fill="#fff" stroke="#858585" stroke-width="3"/>
          <g stroke="#d4d4d4" stroke-width="2.500">
            <path d="M618 572H1622M618 641.500H1622M618 712H1622M618 781H1622M618 851H1622M618 920H1622M618 991H1622M618 1060H1622M618 1130H1622"/>
          </g>
          <text x="1069" y="529" font-size="35" fill="#1c1c1c" text-anchor="middle">Evolução das Vendas ao Longo do Tempo</text>
          <g font-size="24" fill="#1c1c1c" text-anchor="end">
            <text x="594" y="580">16.000€</text><text x="594" y="650">14.000€</text><text x="594" y="719">12.000€</text><text x="594" y="789">10.000€</text>
            <text x="594" y="859">8.000€</text><text x="594" y="928">6.000€</text><text x="594" y="999">4.000€</text><text x="594" y="1068">2.000€</text><text x="594" y="1138">0€</text>
          </g>
          <g font-size="21" fill="#1c1c1c" text-anchor="middle">
            <text x="668" y="1170">Jaino</text><text x="769" y="1170">Fevereiro</text><text x="867" y="1170">Março</text><text x="963" y="1170">Abril</text><text x="1063" y="1170">Jullho</text><text x="1162" y="1170">Julho</text><text x="1263" y="1170">Setembro</text><text x="1364" y="1170">Outo</text><text x="1462" y="1170">Novenbro</text><text x="1569" y="1170">Dezembro</text>
          </g>
          <polyline points="667,1058 768,1039 868,1012 964,971 1063,946 1162,953 1265,887 1364,868 1468,751 1568,602" fill="none" stroke="#3c62a6" stroke-width="5" stroke-linejoin="round" stroke-linecap="round"/>
          <g fill="#fff" stroke="#858585" stroke-width="3">
            <circle cx="488" cy="472" r="8"/><circle cx="1069" cy="472" r="8"/><circle cx="1651" cy="472" r="8"/>
            <circle cx="488" cy="834" r="8"/><circle cx="1651" cy="834" r="8"/>
            <circle cx="488" cy="1197" r="8"/><circle cx="1069" cy="1197" r="8"/><circle cx="1651" cy="1197" r="8"/>
          </g>
        </svg>

        <div class="side-btn sb-1"><svg width="30" height="30" viewBox="0 0 30 30"><path d="M15 1v28M1 15h28" stroke="#3c7d5a" stroke-width="2"/></svg></div>
        <div class="side-btn sb-2"><svg width="34" height="36" viewBox="0 0 34 36"><path d="M31 2c2 1 2 3 1 4L13 27l-6-4L27 3c1-1 3-2 4-1z" fill="#fff" stroke="#3d3d3d" stroke-width="1.800"/><path d="M7 23l6 4-6 6-6 1z" fill="#6fb5cf" stroke="#2f7f9e" stroke-width="1.800"/></svg></div>
        <div class="side-btn sb-3"><svg width="36" height="38" viewBox="0 0 36 38"><path d="M2 2h32L22 19v16h-8V19z" fill="#e4e4e4" stroke="#2f7d58" stroke-width="2" stroke-linejoin="round"/></svg></div>

        <div class="insight">
          <div class="ins-title">
            <svg class="mt-1" width="28" height="30" viewBox="0 0 28 30"><path d="M16 2l10 10-4 1-5 6-1 5-9-9 5-1 5-6z" fill="none" stroke="#333" stroke-width="2" stroke-linejoin="round"/><path d="M9 20l-7 8" stroke="#333" stroke-width="2" stroke-linecap="round"/></svg>
            <span>Insight Rápido: Pico de vendas em Dezembro</span>
          </div>
          <div>As vendas atingiram o valor mais<br>alto do ano, 15.000€, em<br>Dezembros, 15.000€, em Dezembro.<br>Deseja analisar os fatores que<br>contribuíram para este aumento?</div>
          <div class="ins-btn">
            <svg width="28" height="28" viewBox="0 0 28 28"><path d="M2 2h24v18H10l-6 6v-6H2z" fill="none" stroke="#2f7d58" stroke-width="2" stroke-linejoin="round"/></svg>
            <span>Dvaro um sugestão</span>
          </div>
        </div>
      </div>
      <div class="vscroll"><div class="tri-up"></div><div class="thumb"></div><div class="tri-dn"></div></div>
    </div>

    <div class="tabbar">
      <div class="sh-nav">
        <svg width="12" height="20" viewBox="0 0 12 20"><path d="M10 2L3 10l7 8" fill="none" stroke="#aaa" stroke-width="2"/></svg>
        <svg width="12" height="20" viewBox="0 0 12 20"><path d="M2 2l7 8-7 8" fill="none" stroke="#aaa" stroke-width="2"/></svg>
      </div>
      <div class="sh-tab">Excel</div>
      <svg class="sh-add" viewBox="0 0 28 28"><circle cx="14" cy="14" r="12.500" fill="none" stroke="#666" stroke-width="2"/><path d="M14 7v14M7 14h14" stroke="#555" stroke-width="2"/></svg>
      <div class="sh-dots"><i></i><i></i><i></i></div>
      <div class="hscroll"><div class="tri-lt"></div><div class="thumb"></div><div class="tri-rt"></div></div>
    </div>
  </div>

  <aside class="pane">
    <div class="pane-hd">
      <div class="pane-title">Copilot</div>
      <svg class="me-5" viewBox="0 0 26 26"><path d="M2 8l11 11L24 8" fill="none" stroke="#333" stroke-width="2"/></svg>
      <svg viewBox="0 0 26 26"><path d="M4 4l18 18M22 4L4 22" fill="none" stroke="#222" stroke-width="2.500"/></svg>
    </div>
    <div class="bub-me">cria um gráfico de linhas mostrando a evolução das vendas ao longo do tempo</div>
    <div class="cp-who">
      <svg width="40" height="38" viewBox="0 0 40 38">
        <defs>
          <linearGradient id="cpA" x1="0.700" y1="0" x2="0.200" y2="1"><stop offset="0" stop-color="#2b8fe8"/><stop offset=".45" stop-color="#2fc0b0"/><stop offset=".8" stop-color="#a8d840"/><stop offset="1" stop-color="#f0c030"/></linearGradient>
          <linearGradient id="cpB" x1="0.800" y1="0" x2="0.300" y2="1"><stop offset="0" stop-color="#8a4fe0"/><stop offset=".55" stop-color="#e060c8"/><stop offset="1" stop-color="#f08050"/></linearGradient>
        </defs>
        <path d="M12 2c4-2 10-2 13 1L19 30c-1 5-5 7-9 6C4 35 1 30 1 23 1 14 6 5 12 2z" fill="url(#cpA)"/>
        <path d="M25 10c6-2 13 2 14 10 1 8-5 15-12 16l-12 1c-3 0-3-2-2-4l8-19c1-2 2-3 4-4z" fill="url(#cpB)"/>
        <path d="M24 13L17 31" stroke="#fff" stroke-width="3" stroke-linecap="round"/>
      </svg>
      <span>Copilot</span>
    </div>
    <div class="bub-ai">Aqui está o gráfico de linhas com a evolução das vendas. Destaquei um insight sobre o pico em Dezembro.</div>
    <div class="msg-box">
      <div class="msg-top">
        <span>Entera de um menseje...</span>
        <svg width="26" height="34" viewBox="0 0 26 34"><rect x="8" y="2" width="10" height="20" rx="5" fill="none" stroke="#222" stroke-width="2.200"/><path d="M2 16c0 14 22 14 22 0M13 27v5" fill="none" stroke="#222" stroke-width="2.200"/></svg>
      </div>
      <div class="msg-bot">
        <svg width="28" height="32" viewBox="0 0 28 32"><path d="M19 9L9 22c-2 3-1 5 0 6s4 1 6-2L25 12c3-4 2-7 0-9s-6-2-9 2L4 20c-3 5-2 8 0 9" fill="none" stroke="#222" stroke-width="2.200" stroke-linecap="round" stroke-linejoin="round"/></svg>
        <svg width="30" height="28" viewBox="0 0 30 28"><path d="M2 7h7l3-5h7l3 5h6v19H2z" fill="none" stroke="#222" stroke-width="2.200" stroke-linejoin="round"/><circle cx="15" cy="15" r="5.500" fill="none" stroke="#222" stroke-width="2.200"/></svg>
        <svg class="ms-auto me-1" width="30" height="28" viewBox="0 0 30 28"><path d="M2 2l26 12L2 26l6-12zM8 14h20" fill="none" stroke="#b7b7b7" stroke-width="2.200" stroke-linejoin="round"/></svg>
      </div>
    </div>
  </aside>
</div>

<!-- status bar -->
<footer class="statusbar">
  <span>Pvoses</span>
  <svg class="st-cal" width="26" height="30" viewBox="0 0 26 30"><path d="M2 4h22" stroke="#333" stroke-width="4"/><path d="M4 9v18h7M10 12v-2" fill="none" stroke="#333" stroke-width="2"/><circle cx="17" cy="20" r="7" fill="none" stroke="#333" stroke-width="2"/><path d="M17 16v4l3 2" fill="none" stroke="#333" stroke-width="1.800"/></svg>
  <span>Compratıent-ɛ n-ininados</span>
  <div class="st-right">
    <div class="st-view on"><svg width="24" height="24" viewBox="0 0 24 24"><path d="M1 1h22v22H1zM1 8h22M1 16h22M8 1v22M16 1v22" fill="none" stroke="#333" stroke-width="2"/></svg></div>
    <div class="st-view"><svg width="24" height="26" viewBox="0 0 24 26"><path d="M1 1h22v24H1zM6 6h12v14H6zM6 13h12M12 17v3" fill="none" stroke="#333" stroke-width="2"/></svg></div>
    <div class="st-view"><svg width="24" height="24" viewBox="0 0 24 24"><path d="M1 1h22v22H1zM8 1v12h8V1" fill="none" stroke="#333" stroke-width="2"/></svg></div>
    <span class="zm zm-first">−</span>
    <div class="zoomer"><i></i></div>
    <span class="zm">+</span>
    <span class="zm-pct">100%</span>
  </div>
</footer>

<script src="https://cdn.jsdelivr.net/npm/bootstrap@5.3.3/dist/js/bootstrap.bundle.min.js"></script>
<script>
  // pad every row with blank cells up to the table's last column
  document.querySelectorAll("table.sheet").forEach(function (table) {
    const cols = table.querySelectorAll("col").length;
    table.querySelectorAll("tbody tr").forEach(function (row) {
      while (row.cells.length < cols) {
        row.appendChild(document.createElement("td"));
      }
    });
  });
</script>
</body>
</html>
